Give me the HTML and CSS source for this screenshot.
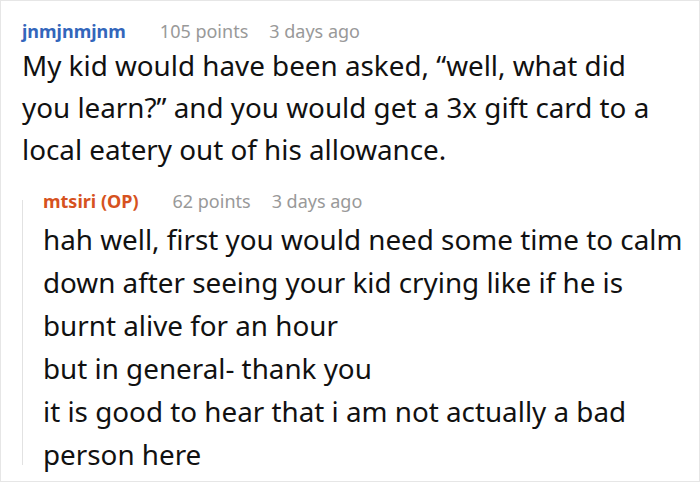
FILE: index.html
```html
<!DOCTYPE html>
<html>
<head>
<meta charset="utf-8">
<link rel="stylesheet" href="styles.css">
</head>
<body>
<div class="thread">
  <div class="comment">
    <div class="meta">
      <span class="author">jnmjnmjnm</span>
      <span class="info">105 points</span>
      <span class="info">3 days ago</span>
    </div>
    <div class="text main-text">My kid would have been asked, “well, what did<br>you learn?” and you would get a 3x gift card to a<br>local eatery out of his allowance.</div>
  </div>
  <div class="reply">
    <div class="meta">
      <span class="author op">mtsiri (OP)</span>
      <span class="info">62 points</span>
      <span class="info">3 days ago</span>
    </div>
    <div class="text reply-text">hah well, first you would need some time to calm<br>down after seeing your kid crying like if he is<br>burnt alive for an hour<br>but in general- thank you<br>it is good to hear that i am not actually a bad<br>person here</div>
  </div>
</div>
</body>
</html>
```
FILE: styles.css
```css
html, body {
  margin: 0;
  padding: 0;
  background: #ffffff;
}
.thread {
  width: 700px;
  box-sizing: border-box;
  border: 1px solid #e6e6e6;
  padding: 18px 10px 5px 21px;
  font-family: "Noto Sans", "Open Sans", sans-serif;
  color: #111111;
}
.meta {
  display: flex;
  gap: 21px;
  font-size: 18px;
  line-height: 24px;
  white-space: nowrap;
}
.author {
  color: #3366bb;
  font-weight: 700;
  margin-right: 13px;
}
.author.op {
  color: #d65220;
}
.info {
  color: #999999;
}
.text {
  white-space: nowrap;
  font-size: 27.8px;
}
.main-text {
  margin-top: 1px;
  line-height: 42px;
}
.reply {
  position: relative;
  margin-top: 19px;
  padding-left: 21px;
}
.reply::before {
  content: "";
  position: absolute;
  left: 0;
  top: 11px;
  bottom: 11px;
  width: 1px;
  background: #e2e2e2;
}
.reply-text {
  margin-top: 5px;
  line-height: 43px;
}
```
